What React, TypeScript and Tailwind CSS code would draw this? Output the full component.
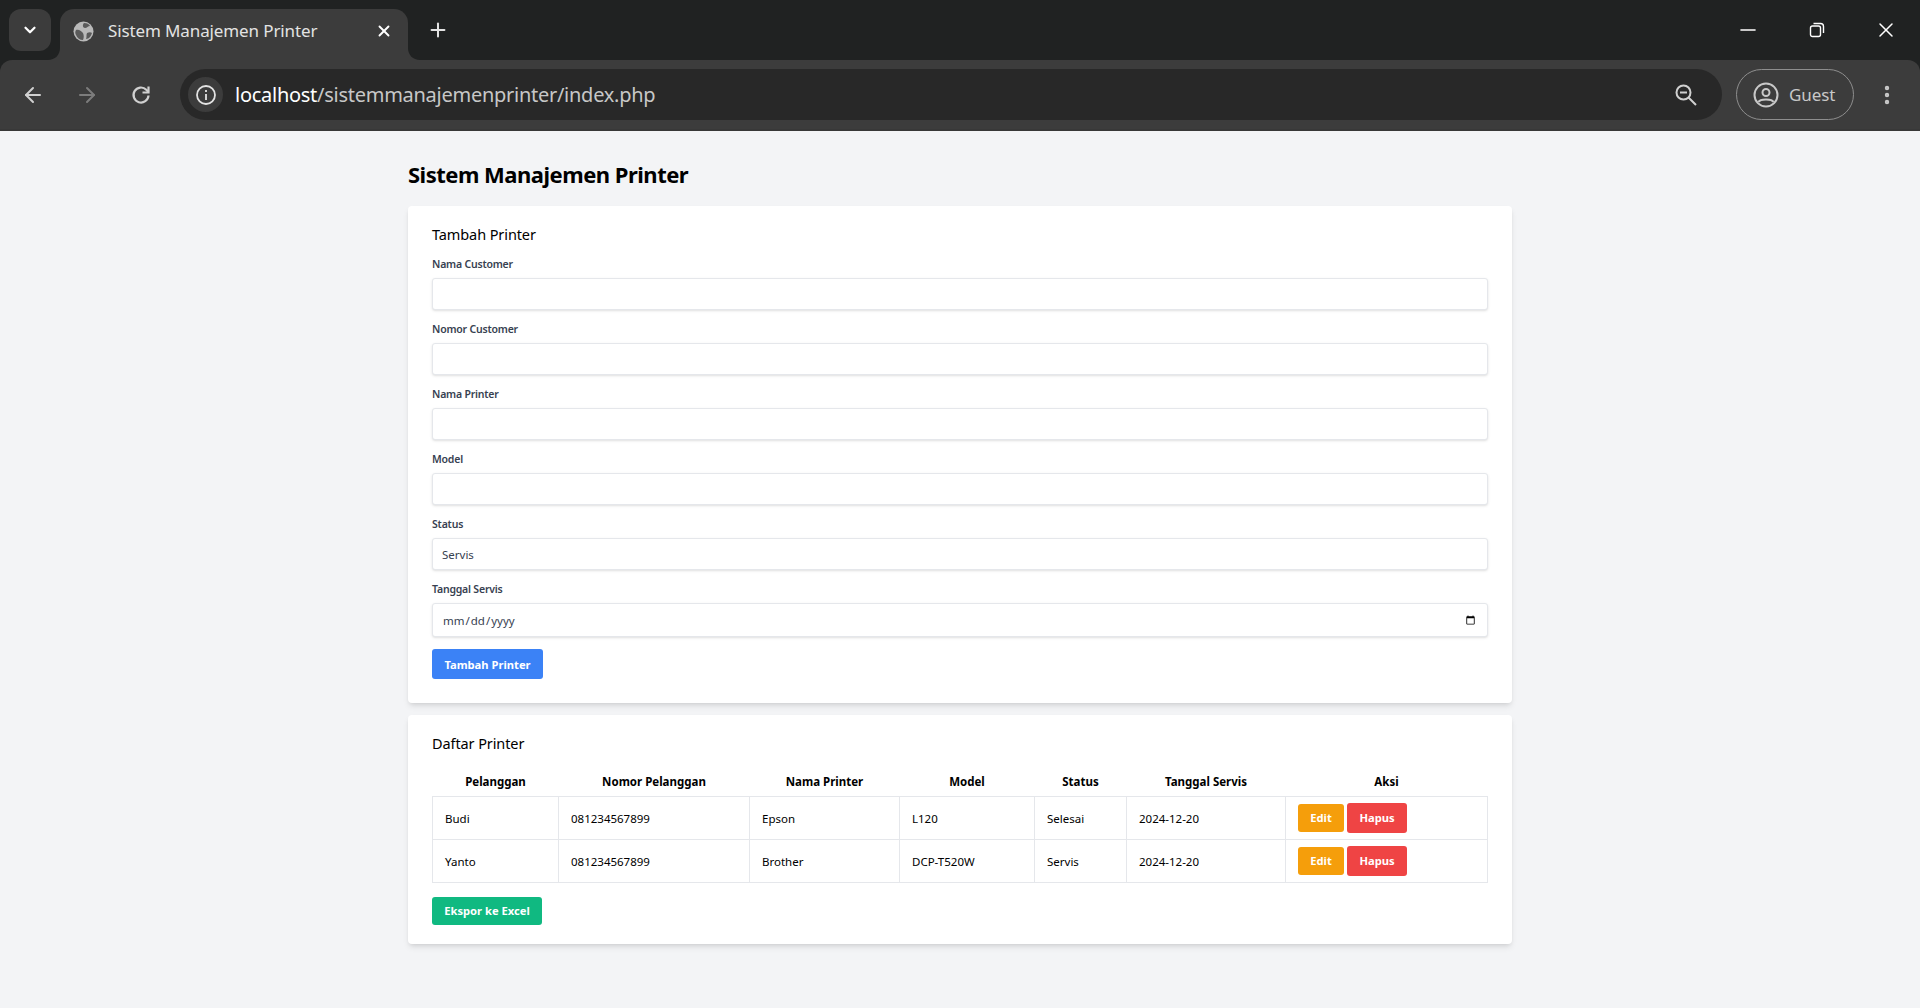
import React from "react";
import { ArrowLeft, ArrowRight, ChevronDown, EllipsisVertical, Minus, Plus, X } from "lucide-react";

const fields = ["Nama Customer", "Nomor Customer", "Nama Printer", "Model"];

const rows = [
  { name: "Budi", phone: "081234567899", printer: "Epson", model: "L120", status: "Selesai", date: "2024-12-20" },
  { name: "Yanto", phone: "081234567899", printer: "Brother", model: "DCP-T520W", status: "Servis", date: "2024-12-20" },
];

const inputClass =
  "block w-full rounded-[3px] border border-[#e5e7eb] bg-white px-[9px] text-[11.5px] text-[#374151] shadow-sm outline-none";
const labelClass = "mb-[6px] block text-[10.5px] font-semibold leading-[16px] tracking-[-0.2px] text-[#374151]";
const cellClass = "border border-[#e5e7eb] px-3 pt-[2px]";

function BrowserChrome() {
  return (
    <div className="h-[131px] bg-[#202222] text-[#e3e3e3]">
      <div className="flex h-[60px] items-center pl-[9px]">
        <button className="flex h-[42px] w-[42px] items-center justify-center rounded-[12px] bg-[#3c3c3c]">
          <ChevronDown size={18} strokeWidth={3} className="text-white" />
        </button>
        <div className="relative ml-[9px] flex h-[51px] w-[348px] items-center self-end rounded-t-[14px] bg-[#3c3c3c] pb-[7px] pl-[13px]">
          <svg className="absolute bottom-0 left-[-12px]" width="12" height="12" viewBox="0 0 12 12">
            <path d="M12 0V12H0C7 12 12 7 12 0Z" fill="#3c3c3c" />
          </svg>
          <svg className="absolute bottom-0 right-[-12px]" width="12" height="12" viewBox="0 0 12 12">
            <path d="M0 0V12H12C5 12 0 7 0 0Z" fill="#3c3c3c" />
          </svg>
          <svg width="21" height="21" viewBox="0 0 21 21">
            <circle cx="10.5" cy="10.5" r="10" fill="#b9b9b9" />
            <path d="M11 2c3 0 5 1 6 3-2 0-3 2-5 2S9 4 11 2ZM3 9c3-1 5 1 7 3 1 2 1 5 0 7-3 0-6-2-7-5-1-2-1-3 0-5ZM14 12c2-1 4-1 5 0-1 3-3 6-6 6 1-2 0-4 1-6Z" fill="#5a5a5a" />
          </svg>
          <span className="ml-[14px] text-[17px] tracking-[-0.12px] text-[#e3e3e3]">Sistem Manajemen Printer</span>
          <X size={18} strokeWidth={2.5} className="absolute left-[315px] text-white" />
        </div>
        <Plus size={22} strokeWidth={2.2} className="ml-[19px] text-[#e3e3e3]" />
        <div className="ml-auto flex items-center">
          <span className="flex h-[60px] w-[69px] items-center justify-center">
            <Minus size={24} strokeWidth={1.6} className="text-white" />
          </span>
          <span className="flex h-[60px] w-[69px] items-center justify-center">
            <svg width="16" height="16" viewBox="0 0 16 16" fill="none" stroke="#fff" strokeWidth="1.4">
              <rect x="1.5" y="4" width="10" height="10.5" rx="2" />
              <path d="M4.5 1.5H11.5A3 3 0 0 1 14.5 4.5V11" />
            </svg>
          </span>
          <span className="flex h-[60px] w-[69px] items-center justify-center">
            <X size={24} strokeWidth={1.5} className="text-white" />
          </span>
        </div>
      </div>
      <div className="flex h-[71px] items-center rounded-t-[12px] border-b-2 border-[#383838] bg-[#3c3c3c] pl-[11px] pr-[11px]">
        <div className="flex gap-[10px]">
          <span className="flex h-[44px] w-[44px] items-center justify-center">
            <ArrowLeft size={24} strokeWidth={2} className="text-[#d0d0d0]" />
          </span>
          <span className="flex h-[44px] w-[44px] items-center justify-center">
            <ArrowRight size={24} strokeWidth={2} className="text-[#7c7c7c]" />
          </span>
          <span className="flex h-[44px] w-[44px] items-center justify-center">
            <svg width="24" height="24" viewBox="0 0 24 24" fill="none" stroke="#d0d0d0" strokeWidth="2.2">
              <path d="M19.500 12.500A7.500 7.500 0 1 1 17.300 6.700L19.500 9" />
              <path d="M19.500 3.500V9.500H13.500" />
            </svg>
          </span>
        </div>
        <div className="ml-[17px] flex h-[51px] flex-1 items-center rounded-full bg-[#282828] pl-[8px] pr-[24px]">
          <span className="flex h-[35px] w-[35px] items-center justify-center rounded-full bg-[#3c3c3c]">
            <svg width="22" height="22" viewBox="0 0 22 22" fill="none" stroke="#e3e3e3" strokeWidth="1.8">
              <circle cx="11" cy="11" r="9" />
              <path d="M11 10V16M11 6V8" />
            </svg>
          </span>
          <span className="ml-[12px] text-[20px] tracking-[-0.27px] text-[#c7c7c7]">
            <span className="text-white">localhost</span>/sistemmanajemenprinter/index.php
          </span>
          <svg className="ml-auto" width="24" height="24" viewBox="0 0 24 24" fill="none" stroke="#d0d0d0" strokeWidth="2">
            <circle cx="9.5" cy="9.5" r="7" />
            <path d="M14.5 14.5L22 22M6 9.5H13" />
          </svg>
        </div>
        <div className="ml-[14px] flex h-[51px] w-[118px] items-center rounded-full border border-[#8e8e8e] pl-[16px]">
          <svg width="26" height="26" viewBox="0 0 26 26" fill="none" stroke="#c8c8c8" strokeWidth="2">
            <circle cx="13" cy="13" r="11.5" />
            <circle cx="13" cy="10.5" r="3.5" />
            <path d="M5.5 20C7 16.5 19 16.5 20.500 20" />
          </svg>
          <span className="ml-[10px] text-[17px] tracking-[-0.1px] text-[#c8c8c8]">Guest</span>
        </div>
        <span className="ml-[11px] flex h-[44px] w-[44px] items-center justify-center">
          <EllipsisVertical size={24} strokeWidth={2.4} className="text-[#c8c8c8]" />
        </span>
      </div>
    </div>
  );
}

export default function App() {
  return (
    <div className="min-h-[1008px] bg-[#f3f4f6] font-['Noto_Sans',sans-serif] text-black">
      <BrowserChrome />
      <div className="mx-auto w-[1104px] pt-[27px]">
        <h1 className="mb-[16px] text-[22px] font-bold leading-[32px] tracking-[-0.5px]">Sistem Manajemen Printer</h1>

        <div className="mb-[12px] rounded-[4px] bg-white px-6 pb-6 pt-4 shadow-md">
          <h2 className="mb-[10px] text-[14.5px] leading-[24px] tracking-[-0.1px]">Tambah Printer</h2>
          {fields.map((label) => (
            <div key={label} className="mb-[11px]">
              <label className={labelClass}>{label}</label>
              <input type="text" className={`${inputClass} h-[32px]`} />
            </div>
          ))}
          <div className="mb-[11px]">
            <label className={labelClass}>Status</label>
            <select className={`${inputClass} h-[32px] appearance-none pt-[2px]`} defaultValue="Servis">
              <option>Servis</option>
              <option>Selesai</option>
            </select>
          </div>
          <div className="mb-[12px]">
            <label className={labelClass}>Tanggal Servis</label>
            <input type="date" className={`${inputClass} h-[34px] pt-[2px]`} />
          </div>
          <button className="h-[30px] w-[111px] rounded-[3px] bg-[#3b82f6] pt-[2px] text-[11.2px] font-bold text-white">Tambah Printer</button>
        </div>

        <div className="rounded-[4px] bg-white px-6 pb-[19px] pt-4 shadow-md">
          <h2 className="mb-[11px] text-[14.5px] leading-[24px] tracking-[-0.1px]">Daftar Printer</h2>
          <table className="w-[1055px] table-fixed border-collapse text-[11.5px]">
            <colgroup>
              <col className="w-[126px]" />
              <col className="w-[191px]" />
              <col className="w-[150px]" />
              <col className="w-[135px]" />
              <col className="w-[92px]" />
              <col className="w-[159px]" />
              <col className="w-[202px]" />
            </colgroup>
            <thead>
              <tr className="h-[30px] font-bold">
                <th className="pt-[2px]">Pelanggan</th>
                <th className="pt-[2px]">Nomor Pelanggan</th>
                <th className="pt-[2px]">Nama Printer</th>
                <th className="pt-[2px]">Model</th>
                <th className="pt-[2px]">Status</th>
                <th className="pt-[2px]">Tanggal Servis</th>
                <th className="pt-[2px]">Aksi</th>
              </tr>
            </thead>
            <tbody>
              {rows.map((r) => (
                <tr key={r.name} className="h-[43px]">
                  <td className={cellClass}>{r.name}</td>
                  <td className={cellClass}>{r.phone}</td>
                  <td className={cellClass}>{r.printer}</td>
                  <td className={cellClass}>{r.model}</td>
                  <td className={cellClass}>{r.status}</td>
                  <td className={cellClass}>{r.date}</td>
                  <td className="border border-[#e5e7eb] px-3">
                    <div className="flex items-center gap-[3px]">
                      <button className="h-[28px] w-[46px] rounded-[3px] bg-[#f59e0b] pt-[2px] text-[11.2px] font-bold text-white">Edit</button>
                      <button className="h-[30px] w-[60px] rounded-[3px] bg-[#ef4444] pt-[2px] text-[11.2px] font-bold text-white">Hapus</button>
                    </div>
                  </td>
                </tr>
              ))}
            </tbody>
          </table>
          <button className="mt-[14px] h-[28px] w-[110px] rounded-[3px] bg-[#10b981] pt-[1px] text-[11.2px] font-bold text-white">Ekspor ke Excel</button>
        </div>
      </div>
    </div>
  );
}
